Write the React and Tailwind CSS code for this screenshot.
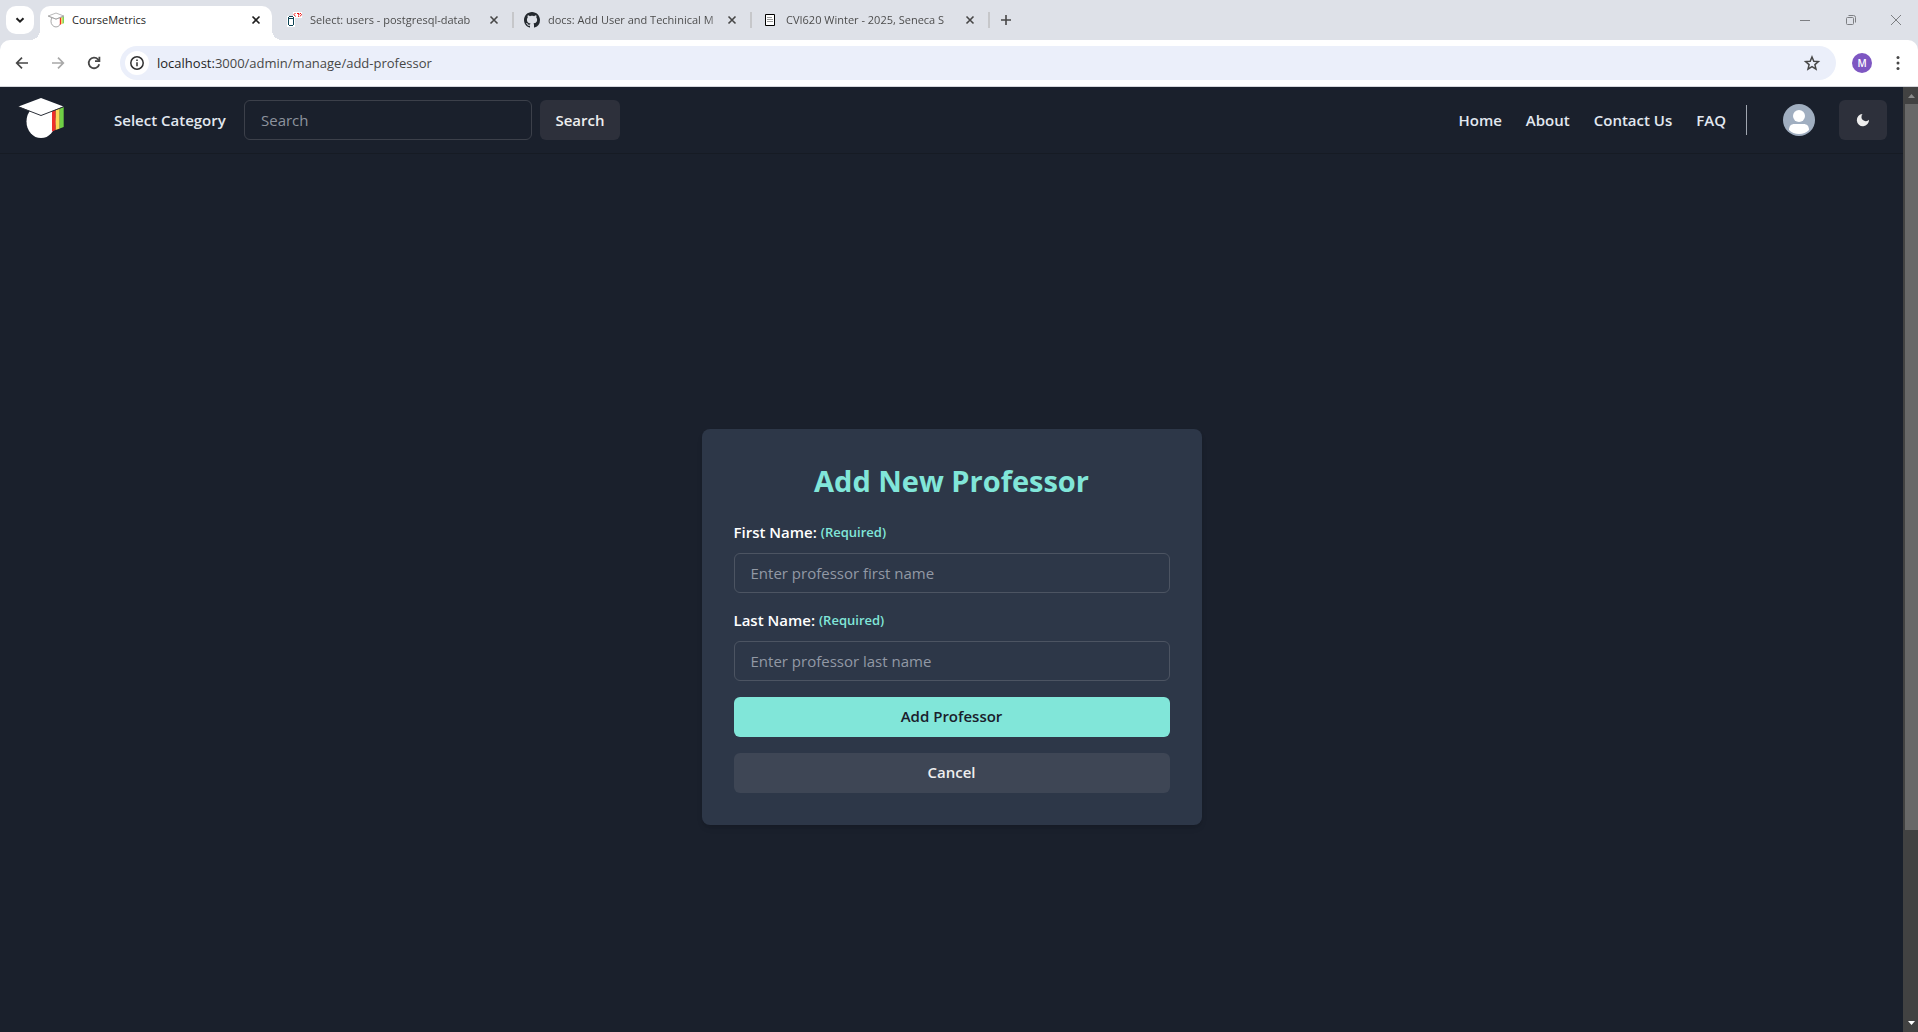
function ChevronIcon() {
  return (
    <svg viewBox="0 0 28 28" className="size-7" fill="none" stroke="#1f1f1f" strokeWidth="2">
      <path d="M10.5 12.2 14 15.7l3.500-3.500" />
    </svg>
  );
}

function CapIcon({ className, outline }) {
  const edge = outline ? "#9a9a9a" : "#2b2f38";
  return (
    <svg viewBox="0 0 46 42" className={className} aria-hidden="true">
      <ellipse cx="23" cy="24.500" rx="14.500" ry="16.500" fill="#fff" stroke={outline ? edge : "none"} strokeWidth="2.500" />
      <path d="M34 14.500 37.700 13v20L34 34.500z" fill="#ee2f2b" />
      <path d="M37.700 13 41.700 11.500V31.500L37.700 33z" fill="#f9d857" />
      <path d="M41.700 11.500 45.700 10V30L41.700 31.500z" fill="#6fcf45" />
      <path d="M0.500 9.500 23 1 45.500 9.500 23 18.500z" fill="#fff" stroke={outline ? edge : "none"} strokeWidth="2" />
      <path d="M0.500 9.800 23 18.500 45.500 9.800" fill="none" stroke={edge} strokeWidth={outline ? "2" : "1"} />
    </svg>
  );
}

function AdminerIcon() {
  return (
    <svg viewBox="0 0 16 16" className="size-4" fill="none" aria-hidden="true">
      <path d="M1 4h6V0h9v6H9v9H1z" fill="#fff" />
      <path d="M3 4.500h4M2.500 5v8M7.500 5v8M3 13.500h4M3 6.500h4" stroke="#0c4354" />
      <path d="M9.500 1 8 2.500 9.500 4.500M11 1.500h2v1.500h-1M12 4.500h.800M14 1l1.500 1.500L14 4.500" stroke="#ee1111" />
    </svg>
  );
}

function GithubIcon() {
  return (
    <svg viewBox="0 0 16 16" className="size-4" fill="#24292f" aria-hidden="true">
      <path d="M8 0C3.580 0 0 3.580 0 8c0 3.540 2.290 6.530 5.470 7.590.4.070.550-.170.550-.380 0-.190-.010-.820-.010-1.490-2.010.370-2.530-.490-2.690-.940-.090-.230-.480-.940-.820-1.130-.280-.150-.680-.520-.010-.530.630-.010 1.080.580 1.230.820.720 1.210 1.870.870 2.330.660.070-.520.280-.870.510-1.070-1.780-.2-3.640-.890-3.640-3.950 0-.870.310-1.590.820-2.150-.080-.2-.360-1.020.080-2.120 0 0 .670-.210 2.200.820.640-.180 1.320-.270 2-.270s1.360.090 2 .270c1.530-1.040 2.200-.820 2.200-.820.440 1.100.160 1.920.080 2.120.510.560.820 1.270.820 2.150 0 3.070-1.870 3.750-3.650 3.950.290.250.540.730.540 1.480 0 1.070-.010 1.930-.010 2.200 0 .210.150.460.550.380A8.010 8.010 0 0 0 16 8c0-4.420-3.580-8-8-8z" />
    </svg>
  );
}

function DocIcon() {
  return (
    <svg viewBox="0 0 16 16" className="size-4" aria-hidden="true">
      <path d="M3.500 2.500h9v11h-9z" fill="#fff" stroke="#000" />
      <path d="M5 5.500h5M5 7.500h6M5 9.500h6" stroke="#9a9a9a" />
    </svg>
  );
}

function CloseIcon() {
  return (
    <svg viewBox="0 0 16 16" className="size-4" stroke="currentColor" strokeWidth="1.600" aria-hidden="true">
      <path d="m4.500 4.500 7 7M11.500 4.500l-7 7" />
    </svg>
  );
}

function BackgroundTab({ icon, title }) {
  return (
    <div className="flex h-4 w-[238px] items-center border-r-2 border-[#c6c7ca] pl-2.5 pr-2.5">
      {icon}
      <span className="ml-2 flex-1 whitespace-nowrap bg-gradient-to-r from-[#474747] from-90% to-[#47474733] bg-clip-text text-[11px] leading-4 text-transparent">
        {title}
      </span>
      <button type="button" aria-label="Close tab" className="text-[#474747]">
        <CloseIcon />
      </button>
    </div>
  );
}

function TabStrip() {
  return (
    <div className="flex h-10 items-center bg-[#dee1e8]">
      <button type="button" aria-label="Search tabs" className="ml-1.5 rounded-[10px] bg-white">
        <ChevronIcon />
      </button>
      <div className="relative ml-1.5 flex h-[34px] w-[232px] items-center self-end rounded-t-[10px] bg-white pb-1.5 pl-2 pr-2">
        <span className="absolute -left-2.5 bottom-0 size-2.5 bg-[radial-gradient(circle_at_top_left,transparent_10px,white_10px)]" />
        <span className="absolute -right-2.5 bottom-0 size-2.5 bg-[radial-gradient(circle_at_top_right,transparent_10px,white_10px)]" />
        <CapIcon className="size-4" outline />
        <span className="ml-2 flex-1 text-[11px] leading-4 text-[#1f1f1f]">CourseMetrics</span>
        <button type="button" aria-label="Close tab" className="text-[#1f1f1f]">
          <CloseIcon />
        </button>
      </div>
      <div className="ml-1 flex items-center">
        <BackgroundTab icon={<AdminerIcon />} title="Select: users - postgresql-datab" />
        <BackgroundTab icon={<GithubIcon />} title="docs: Add User and Techinical M" />
        <BackgroundTab icon={<DocIcon />} title="CVI620 Winter - 2025, Seneca S" />
      </div>
      <button type="button" aria-label="New tab" className="ml-2 text-[#474747]">
        <svg viewBox="0 0 16 16" className="size-4" stroke="currentColor" strokeWidth="1.600">
          <path d="M3 8h10M8 3v10" />
        </svg>
      </button>
      <div className="ml-auto flex text-[#7d7f83]">
        <button type="button" aria-label="Minimize" className="flex h-10 w-[46px] items-center justify-center">
          <svg viewBox="0 0 12 12" className="size-3" stroke="currentColor"><path d="M1 6.500h10" /></svg>
        </button>
        <button type="button" aria-label="Restore" className="flex h-10 w-[46px] items-center justify-center">
          <svg viewBox="0 0 12 12" className="size-3" fill="none" stroke="currentColor">
            <rect x="1.500" y="3.500" width="7" height="7" rx="1" />
            <path d="M3.500 1.500h5a2 2 0 0 1 2 2v5" />
          </svg>
        </button>
        <button type="button" aria-label="Close" className="flex h-10 w-11 items-center justify-center">
          <svg viewBox="0 0 12 12" className="size-3" stroke="currentColor"><path d="m1 1 10 10M11 1 1 11" /></svg>
        </button>
      </div>
    </div>
  );
}

function Toolbar() {
  return (
    <div className="bg-[#dee1e8]">
      <div className="flex h-[47px] items-center rounded-t-[10px] border-b border-[#d5d7dc] bg-white pl-3.5 pr-3 text-[#474747]">
        <button type="button" aria-label="Back">
          <svg viewBox="0 0 16 16" className="size-4" fill="none" stroke="currentColor" strokeWidth="1.700">
            <path d="M14 8H3M8 2.700 2.700 8 8 13.300" />
          </svg>
        </button>
        <button type="button" aria-label="Forward" className="ml-5 text-[#a8a8a8]">
          <svg viewBox="0 0 16 16" className="size-4" fill="none" stroke="currentColor" strokeWidth="1.700">
            <path d="M2 8h11M8 2.700 13.300 8 8 13.300" />
          </svg>
        </button>
        <button type="button" aria-label="Reload" className="ml-5">
          <svg viewBox="0 0 16 16" className="size-4" fill="none" stroke="currentColor" strokeWidth="1.800">
            <path d="M13.200 9.200A5.300 5.300 0 1 1 12 4.400l1.300 1.300" />
            <path d="M13.400 1.800V6.200H9" />
          </svg>
        </button>
        <div className="ml-[18px] flex h-[34px] flex-1 items-center rounded-full bg-[#ebeffa] pl-[5px] pr-[15px]">
          <button type="button" aria-label="View site information" className="flex size-6 items-center justify-center rounded-full bg-white">
            <svg viewBox="0 0 16 16" className="size-4" fill="none" stroke="#303030" strokeWidth="1.500">
              <circle cx="8" cy="8" r="6.200" />
              <path d="M8 7.300v3.900M8 4.600v1.500" />
            </svg>
          </button>
          <div className="ml-2 flex-1 text-[13px] leading-5 text-[#474747]">
            <span className="text-[#1f1f1f]">localhost:</span>3000/admin/manage/add-professor
          </div>
          <button type="button" aria-label="Bookmark this tab">
            <svg viewBox="0 0 18 18" className="size-[18px]" fill="none" stroke="currentColor" strokeWidth="1.500">
              <path d="m9 3 1.800 4.200 4.600.400-3.500 3 1.100 4.500L9 12.700l-4 2.400 1.100-4.500-3.500-3 4.600-.400z" />
            </svg>
          </button>
        </div>
        <button type="button" aria-label="Profile" className="ml-4 flex size-5 items-center justify-center rounded-full bg-[#7e57c2] text-[10px] font-semibold text-white">
          M
        </button>
        <button type="button" aria-label="Menu" className="ml-[18px]">
          <svg viewBox="0 0 16 16" className="size-4" fill="currentColor">
            <circle cx="8" cy="2.500" r="1.500" />
            <circle cx="8" cy="8" r="1.500" />
            <circle cx="8" cy="13.500" r="1.500" />
          </svg>
        </button>
      </div>
    </div>
  );
}

function SiteHeader() {
  return (
    <header className="flex h-[67px] shrink-0 items-center justify-between border-b border-[#161b24] pl-[18px] pr-4 text-[15px] font-semibold text-[#e2e8f0]">
      <div className="flex items-center">
        <a href="#home" aria-label="CourseMetrics home" className="pb-1">
          <CapIcon className="h-[42px] w-[46px]" />
        </a>
        <button type="button" className="ml-[50px] w-[114px] whitespace-nowrap text-left">Select Category</button>
        <form className="ml-4 flex gap-2" onSubmit={(e) => e.preventDefault()}>
          <input
            type="text"
            aria-label="Search"
            placeholder="Search"
            className="h-10 w-72 rounded-md border border-[#3c404a] bg-transparent px-4 font-normal placeholder:text-[#8d939e]"
          />
          <button type="submit" className="h-10 w-20 rounded-md bg-[#2d303b] text-[#eeeeee]">Search</button>
        </form>
      </div>
      <div className="flex items-center">
        <nav className="flex items-center gap-6">
          <a href="#home">Home</a>
          <a href="#about">About</a>
          <a href="#contact">Contact Us</a>
          <a href="#faq">FAQ</a>
        </nav>
        <div className="ml-5 h-[30px] w-px bg-[#a0a6b0]" />
        <button type="button" aria-label="Account" className="ml-9">
          <svg viewBox="0 0 32 32" className="size-8">
            <circle cx="16" cy="16" r="16" fill="#a0aec0" />
            <circle cx="16" cy="12" r="6" fill="#fff" />
            <path d="M6 26c0-4 2-6 5.500-6h9c3.500 0 5.500 2 5.500 6-2.500 2.500-6 4-10 4S8.500 28.500 6 26z" fill="#fff" />
          </svg>
        </button>
        <button type="button" aria-label="Toggle color mode" className="ml-6 flex h-10 w-12 items-center justify-center rounded-md bg-[#2d303b]">
          <svg viewBox="0 0 14 14" className="size-3.5" fill="#eeeeee">
            <path d="M6.500 1a3.800 3.800 0 0 0 6.500 5.700A6.100 6.100 0 1 1 6.500 1z" />
          </svg>
        </button>
      </div>
    </header>
  );
}

function NameField({ id, label, placeholder }) {
  return (
    <div>
      <label htmlFor={id} className="flex h-6 items-center gap-1 font-semibold text-white">
        <span>{label}</span>
        <span className="text-[13px] text-[#81e6d9]">(Required)</span>
      </label>
      <input
        id={id}
        type="text"
        placeholder={placeholder}
        className="mt-2 block h-10 w-full rounded-md border border-[#4c5462] bg-transparent px-4 text-white placeholder:text-[#9299a5]"
      />
    </div>
  );
}

function ProfessorForm() {
  return (
    <form
      onSubmit={(e) => e.preventDefault()}
      className="flex w-full max-w-[500px] flex-col gap-4 rounded-lg bg-[#2d3748] p-8 text-[15px] shadow-md"
    >
      <h1 className="mb-1 text-center text-[29px] leading-10 font-bold text-[#81e6d9]">Add New Professor</h1>
      <NameField id="first-name" label="First Name:" placeholder="Enter professor first name" />
      <NameField id="last-name" label="Last Name:" placeholder="Enter professor last name" />
      <button type="submit" className="h-10 rounded-md bg-[#81e6d9] font-semibold text-[#1a202c]">Add Professor</button>
      <button type="button" className="h-10 rounded-md bg-[#3e4655] font-semibold text-[#eeeeee]">Cancel</button>
    </form>
  );
}

function Scrollbar() {
  return (
    <div className="flex w-[15px] shrink-0 flex-col items-center bg-[#424242]" aria-hidden="true">
      <svg viewBox="0 0 15 17" className="h-[17px] w-[15px] shrink-0"><path d="M5 11h7L8.500 7z" fill="#8a8a8a" /></svg>
      <div className="flex w-full flex-1 flex-col pl-0.5">
        <div className="grow-[726] bg-[#686868]" />
        <div className="grow-[185]" />
      </div>
      <svg viewBox="0 0 15 17" className="h-[17px] w-[15px] shrink-0"><path d="M5 6h7L8.500 10z" fill="#fff" /></svg>
    </div>
  );
}

export default function App() {
  return (
    <div className="flex h-screen flex-col overflow-hidden font-['Open_Sans',sans-serif]">
      <TabStrip />
      <Toolbar />
      <div className="flex min-h-0 flex-1 bg-[#1a202c]">
        <div className="flex min-w-0 flex-1 flex-col overflow-hidden">
          <SiteHeader />
          <main className="flex h-[calc(100vh-87px)] shrink-0 items-center justify-center">
            <ProfessorForm />
          </main>
        </div>
        <Scrollbar />
      </div>
    </div>
  );
}
